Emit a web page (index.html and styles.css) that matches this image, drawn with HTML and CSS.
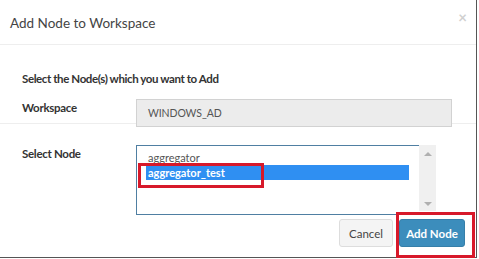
FILE: index.html
```html
<!DOCTYPE html>
<html lang="en">
<head>
    <meta charset="UTF-8">
    <title>Add Node to Workspace</title>
    <link rel="stylesheet" href="styles.css">
</head>
<body>
    <div class="modal">
        <div class="modal-header">
            <h4 class="modal-title">Add Node to Workspace</h4>
            <span class="close">&times;</span>
        </div>

        <div class="modal-body">
            <p class="intro">Select the Node(s) which you want to Add</p>

            <div class="form-row ws-row">
                <label class="form-label">Workspace</label>
                <div class="input-readonly">WINDOWS_AD</div>
            </div>

            <div class="form-row node-row">
                <label class="form-label">Select Node</label>
                <div class="listbox">
                    <div class="list">
                        <div class="option">aggregator</div>
                        <div class="option selected">aggregator_test</div>
                    </div>
                    <div class="scrollbar">
                        <span class="arrow up"></span>
                        <span class="arrow down"></span>
                    </div>
                    <div class="mark mark-option"></div>
                </div>
            </div>
        </div>

        <div class="modal-footer">
            <button class="btn btn-default">Cancel</button>
            <button class="btn btn-primary">Add Node</button>
            <div class="mark mark-button"></div>
        </div>
    </div>
</body>
</html>
```

FILE: styles.css
```css
body {
    margin: 0;
    background: #fff;
    font-family: 'Lato', 'Open Sans', sans-serif;
    color: #333;
}
.modal {
    width: 476px;
    height: 257px;
    border-right: 1px solid #555;
    border-bottom: 1px solid #555;
    display: flex;
    flex-direction: column;
}
.modal-header {
    height: 44px;
    border-bottom: 1px solid #eee;
    display: flex;
    align-items: center;
    justify-content: space-between;
    padding: 0 9px 0 10px;
}
.modal-title {
    margin: 0;
    font-size: 13.5px;
    font-weight: 400;
    color: #444;
    padding-top: 1px;
}
.close {
    font-size: 15px;
    font-weight: 700;
    color: #d0d0d0;
    margin-top: -10px;
}
.modal-body {
    padding-top: 26px;
}
.intro {
    margin: 0 0 12px 22px;
    font-size: 11.5px;
    letter-spacing: -0.4px;
    font-weight: 700;
    line-height: 16px;
    color: #333;
}
.form-row {
    display: flex;
    padding-left: 22px;
}
.form-label {
    width: 114px;
    font-size: 11.5px;
    letter-spacing: -0.3px;
    font-weight: 700;
    line-height: 16px;
    color: #333;
}
.ws-row {
    border-bottom: 1px solid #eee;
    height: 24px;
}
.ws-row .form-label {
    padding-top: 1px;
}
.input-readonly {
    width: 316px;
    height: 28px;
    border: 1px solid #d2d2d2;
    background: #ececec;
    color: #555;
    font-size: 10.5px;
    letter-spacing: -0.1px;
    line-height: 26px;
    padding-left: 11px;
    box-sizing: border-box;
}
.node-row {
    padding-top: 21px;
}
.node-row .form-label {
    padding-top: 1px;
}
.listbox {
    position: relative;
    display: flex;
    align-items: flex-start;
}
.list {
    width: 283px;
    height: 70px;
    box-sizing: border-box;
    border: 1px solid #4f7fa2;
    border-right: none;
    padding: 5px 10px 0 9px;
    font-size: 11px;
    color: #555;
}
.option {
    height: 14px;
    line-height: 14px;
    padding-left: 2px;
}
.option.selected {
    height: 15px;
    line-height: 15px;
    background: #2f8ff2;
    color: #fff;
    font-weight: 700;
}
.scrollbar {
    width: 17px;
    height: 66px;
    background: #f0f0f0;
    display: flex;
    flex-direction: column;
    justify-content: space-between;
    align-items: center;
    padding: 7px 0 5px;
    box-sizing: border-box;
}
.arrow {
    width: 0;
    height: 0;
    border-left: 4px solid transparent;
    border-right: 4px solid transparent;
}
.arrow.up {
    border-bottom: 4px solid #b0b0b0;
}
.arrow.down {
    border-top: 4px solid #b0b0b0;
}
.modal-footer {
    position: relative;
    display: flex;
    justify-content: flex-end;
    gap: 6px;
    padding: 4px 11px 0 0;
}
.btn {
    height: 28px;
    font-family: inherit;
    font-size: 11.5px;
    border-radius: 3px;
    padding: 0;
    cursor: pointer;
}
.btn-default {
    width: 54px;
    background: #f4f4f4;
    border: 1px solid #ddd;
    color: #444;
}
.btn-primary {
    width: 66px;
    background: #3c8dbc;
    border: 1px solid #367fa9;
    color: #fff;
    font-weight: 700;
}
.mark {
    position: absolute;
    border: 3px solid #d7192a;
    box-sizing: border-box;
}
.mark-option {
    left: 2px;
    top: 18px;
    width: 126px;
    height: 25px;
}
.mark-button {
    right: 1px;
    top: -3px;
    width: 79px;
    height: 46px;
}
```
